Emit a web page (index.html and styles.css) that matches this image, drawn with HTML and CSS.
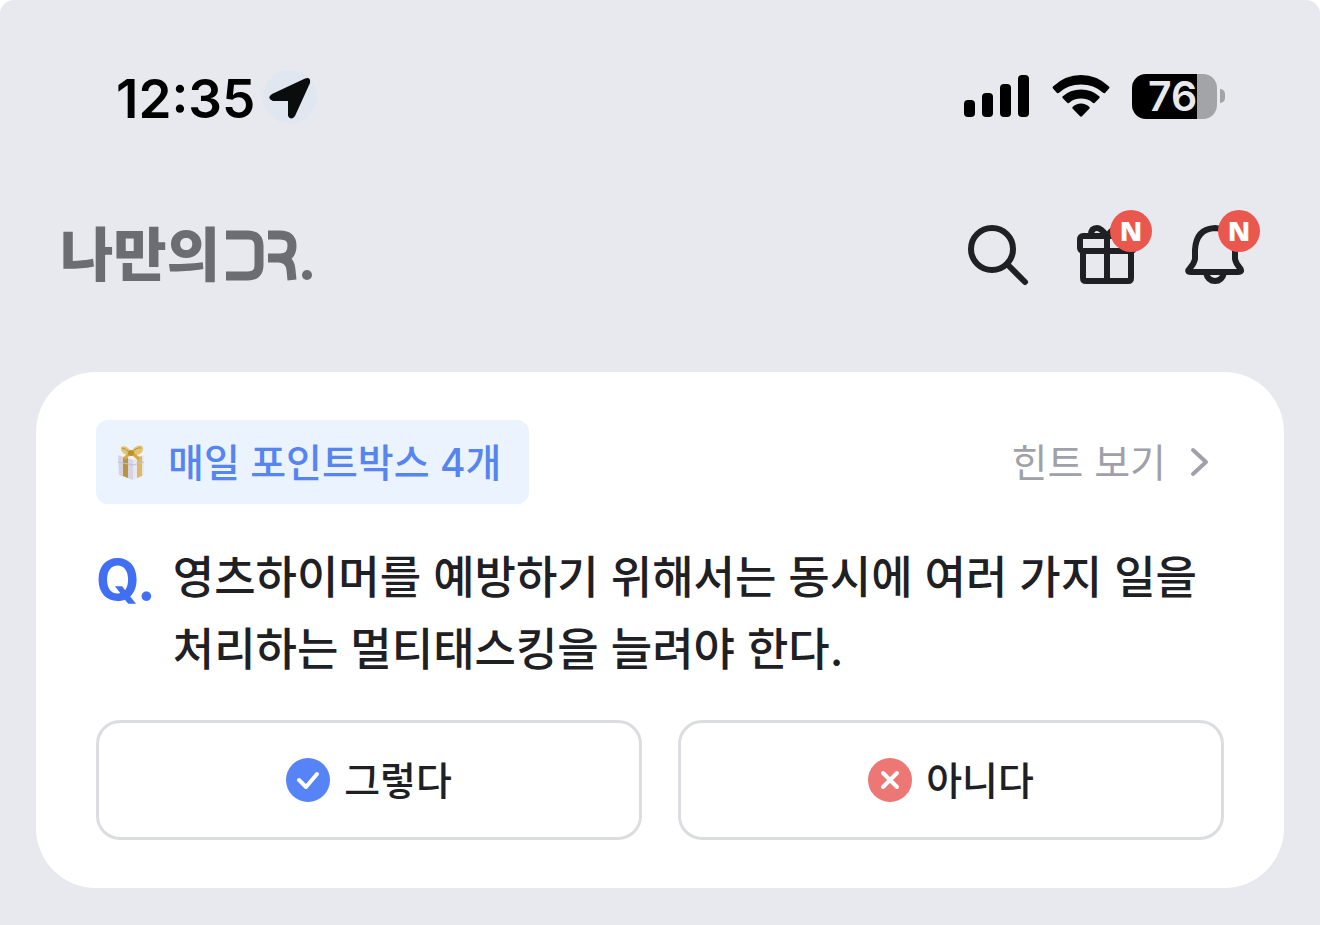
FILE: index.html
```html
<!DOCTYPE html>
<html lang="ko">
<head>
<meta charset="utf-8">
<meta name="viewport" content="width=device-width, initial-scale=1">
<title>나만의 DR.</title>
<link rel="stylesheet" href="styles.css">
</head>
<body>
<div class="screen">
  <div class="status">
    <div class="status-left">
      <span class="clock">12:35</span>
      <span class="location">
        <svg width="54" height="54" viewBox="0 0 54 54" aria-hidden="true"><path d="M9 24 41 9Q48 6 47 13L32 46Q28 51 25 46V31H10Q3 28 9 24Z" fill="#0b0c0d"/></svg>
      </span>
    </div>
    <div class="status-right">
      <svg width="66" height="42" viewBox="0 0 66 42" aria-hidden="true"><rect y="25" width="11" height="17" rx="4"/><rect x="18" y="18" width="11" height="24" rx="4"/><rect x="36" y="9" width="11" height="33" rx="4"/><rect x="54" width="11" height="42" rx="4"/></svg>
      <svg class="wifi" width="58" height="42" viewBox="0 0 58 42" aria-hidden="true"><path d="M1 11.500Q0 12.500 1 13.500L5 18Q6 18.500 7 17.700Q16 9.500 29 9.500T51 17.700Q52 18.500 53 18L57 13.500Q58 12.500 57 11.500Q45 0 29 0T1 11.500Z"/><path d="M10.500 21.500Q10 22.500 10.800 23.200L15.500 28Q16.500 28.500 17.300 27.700Q22 23.500 29 23.500T40.700 27.700Q41.500 28.500 42.500 28L47.200 23.200Q48 22.500 47.500 21.500Q40 14.500 29 14.500T10.500 21.500Z"/><path d="M20.500 32Q20 33 21 34L27.800 41Q29 42.300 30.200 41L37 34Q38 33 37.500 32Q34 28.500 29 28.500T20.500 32Z"/></svg>
      <div class="battery"><span class="battery-body">76</span><span class="battery-cap"></span></div>
    </div>
  </div>

  <header class="header">
    <h1 class="logo">
      <span class="logo-word">나만의</span>
      <svg width="88" height="52" viewBox="0 0 88 52" role="img" aria-label="DR." fill="none" stroke="#6c6d73" stroke-width="9"><path d="M0 6H22Q33 6 33 17V36Q33 47 22 47H0"/><path d="M42 6H54Q66 6 66 16.500Q66 29 54 29H42M52 29Q64 29 65 41L66 51"/><circle cx="81" cy="46" r="5" fill="#6c6d73" stroke="none"/></svg>
    </h1>
    <nav class="actions">
      <button class="action" aria-label="검색"><svg width="62" height="62" viewBox="0 0 62 62"><circle cx="25" cy="25" r="21"/><path d="M40 40 58 58"/></svg></button>
      <button class="action" aria-label="선물"><svg width="62" height="62" viewBox="0 0 62 62"><rect x="5" y="12" width="54" height="15" rx="3"/><path d="M8 27V54Q8 57 11 57H53Q56 57 56 54V27M32 12V57M32 12Q26 4 22 4Q16 4 16 11M32 12Q38 4 43 4Q48 4 48 11"/></svg><span class="badge">N</span></button>
      <button class="action" aria-label="알림"><svg width="62" height="62" viewBox="0 0 62 62"><path d="M32 4Q13 5 12 26V35Q11 40 7 44Q3 48 8 48H55Q60 48 57 44Q53 40 52 35V26Q51 5 32 4ZM23 49Q25 57 32 57T41 49"/></svg><span class="badge">N</span></button>
    </nav>
  </header>

  <main class="card">
    <div class="card-top">
      <div class="chip">
        <svg width="28" height="36" viewBox="0 0 28 36" aria-hidden="true"><path d="M1 11 16 15V36L2 31Z" fill="#d5d4e2"/><path d="M16 15 27 11V31L16 36Z" fill="#e9e6ef"/><path d="M1 11 14 8 27 11 16 16Z" fill="#f3f0f3"/><path d="M6 13 11 14V34L6 32Z" fill="#b9933d"/><path d="M20 13 25 12V32L20 34Z" fill="#d9bb65"/><path d="M1 18 16 21 27 18" fill="none" stroke="#c3c0d2"/><path d="M14 10C9 12 3 8 4 4C5 0 13 3 14 9C16 2 25-1 26 4C27 9 20 13 14 10Z" fill="#e3c56e"/><path d="M13 9Q8 4 5 4M15 9Q19 3 24 4" stroke="#b48f3c" stroke-width="1" fill="none"/><path d="M13 9 7 15M15 9 22 15" stroke="#d3aa43" stroke-width="3"/><circle cx="14" cy="9" r="3" fill="#bd8f2e"/></svg>
        <span>매일 포인트박스 4개</span>
      </div>
      <a class="hint" href="#hint"><span>힌트 보기</span><svg width="20" height="32" viewBox="0 0 20 32" aria-hidden="true"><path d="M3 4 16 16 3 28"/></svg></a>
    </div>
    <div class="question">
      <span class="question-mark">Q.</span>
      <p class="question-text">영츠하이머를 예방하기 위해서는 동시에 여러 가지 일을 처리하는 멀티태스킹을 늘려야 한다.</p>
    </div>
    <div class="answers">
      <button class="answer"><svg width="44" height="44" viewBox="0 0 44 44" aria-hidden="true"><circle cx="22" cy="22" r="22" fill="#5684f6"/><path d="M13 22 20 29 31 16"/></svg><span>그렇다</span></button>
      <button class="answer"><svg width="44" height="44" viewBox="0 0 44 44" aria-hidden="true"><circle cx="22" cy="22" r="22" fill="#ec7774"/><path d="M15 15 29 29M29 15 15 29"/></svg><span>아니다</span></button>
    </div>
  </main>
</div>
</body>
</html>
```

FILE: styles.css
```css
* { box-sizing: border-box; }

body {
  margin: 0;
  background: #fff;
  color: #1f2024;
  font-family: Inter, "Noto Sans CJK KR", sans-serif;
}

button {
  padding: 0;
  border: 0;
  background: none;
  color: inherit;
  font: inherit;
  cursor: pointer;
}

svg { display: block; flex: none; }

.screen {
  min-height: 100vh;
  padding: 68px 36px 36px;
  border-radius: 14px 14px 0 0;
  background: #e8e9ee;
}

.status {
  display: flex;
  justify-content: space-between;
  align-items: center;
  height: 58px;
  padding: 0 59px 0 80px;
  color: #000;
}

.status-left { display: flex; align-items: center; gap: 8px; }
.clock { padding-top: 4px; font-size: 53px; font-weight: 600; line-height: 58px; }
.location { border-radius: 50%; background: #e0e7f1; }
.status-right { display: flex; align-items: center; gap: 22px; padding-bottom: 2px; }

.battery { display: flex; align-items: center; gap: 3px; }
.battery-body {
  width: 85px;
  height: 45px;
  padding-left: 16px;
  border-radius: 14px;
  background: linear-gradient(to right, #000 65px, #a3a4a8 65px);
  color: #e8e9ee;
  font-size: 41px;
  font-weight: 600;
  line-height: 45px;
}
.battery-cap {
  width: 5px;
  height: 14px;
  border-radius: 0 7px 7px 0;
  background: #a3a4a8;
}

.header {
  display: flex;
  justify-content: space-between;
  align-items: center;
  height: 62px;
  margin: 98px 39px 86px 24px;
}

.logo {
  display: flex;
  align-items: center;
  gap: 6px;
  margin: 0;
  color: #6c6d73;
  font-size: 58px;
  font-weight: 900;
  line-height: 62px;
}

.actions { display: flex; gap: 46px; }
.action { position: relative; }
.action svg {
  fill: none;
  stroke: #1f2024;
  stroke-width: 6;
  stroke-linecap: round;
  stroke-linejoin: round;
}
.badge {
  position: absolute;
  top: -14px;
  right: -15px;
  width: 42px;
  height: 42px;
  border-radius: 50%;
  background: #ea574f;
  color: #fff;
  font-family: "Open Sans", sans-serif;
  font-size: 27px;
  font-weight: 800;
  line-height: 42px;
  text-align: center;
}

.card {
  padding: 48px 60px;
  border-radius: 60px;
  background: #fff;
}

.card-top {
  display: flex;
  justify-content: space-between;
  align-items: center;
}
.chip {
  display: flex;
  align-items: center;
  gap: 23px;
  height: 84px;
  padding: 0 28px 0 21px;
  border-radius: 12px;
  background: #eaf3fe;
  color: #5684f0;
  font-size: 39px;
  font-weight: 500;
}
.hint {
  display: flex;
  align-items: center;
  gap: 24px;
  padding-right: 14px;
  color: #a0a1a8;
  font-size: 39px;
  text-decoration: none;
}
.chip span,
.hint span,
.answer span { padding-bottom: 4px; }
.hint svg {
  fill: none;
  stroke: currentColor;
  stroke-width: 4;
  stroke-linecap: round;
  stroke-linejoin: round;
}

.question {
  display: flex;
  gap: 17px;
  margin: 38px 0 34px;
  line-height: 72px;
}
.question-mark {
  color: #416ff4;
  font-size: 56px;
  font-weight: 700;
  line-height: 76px;
}
.question-text {
  flex: 1;
  margin: 0;
  font-size: 45px;
  font-weight: 500;
  word-break: keep-all;
}

.answers {
  display: grid;
  grid-template-columns: 1fr 1fr;
  gap: 36px;
}
.answer {
  display: flex;
  justify-content: center;
  align-items: center;
  gap: 14px;
  height: 120px;
  border: 3px solid #dcdde0;
  border-radius: 24px;
  font-size: 39px;
  font-weight: 500;
}
.answer path {
  fill: none;
  stroke: #fff;
  stroke-width: 4;
  stroke-linecap: round;
  stroke-linejoin: round;
}
```
